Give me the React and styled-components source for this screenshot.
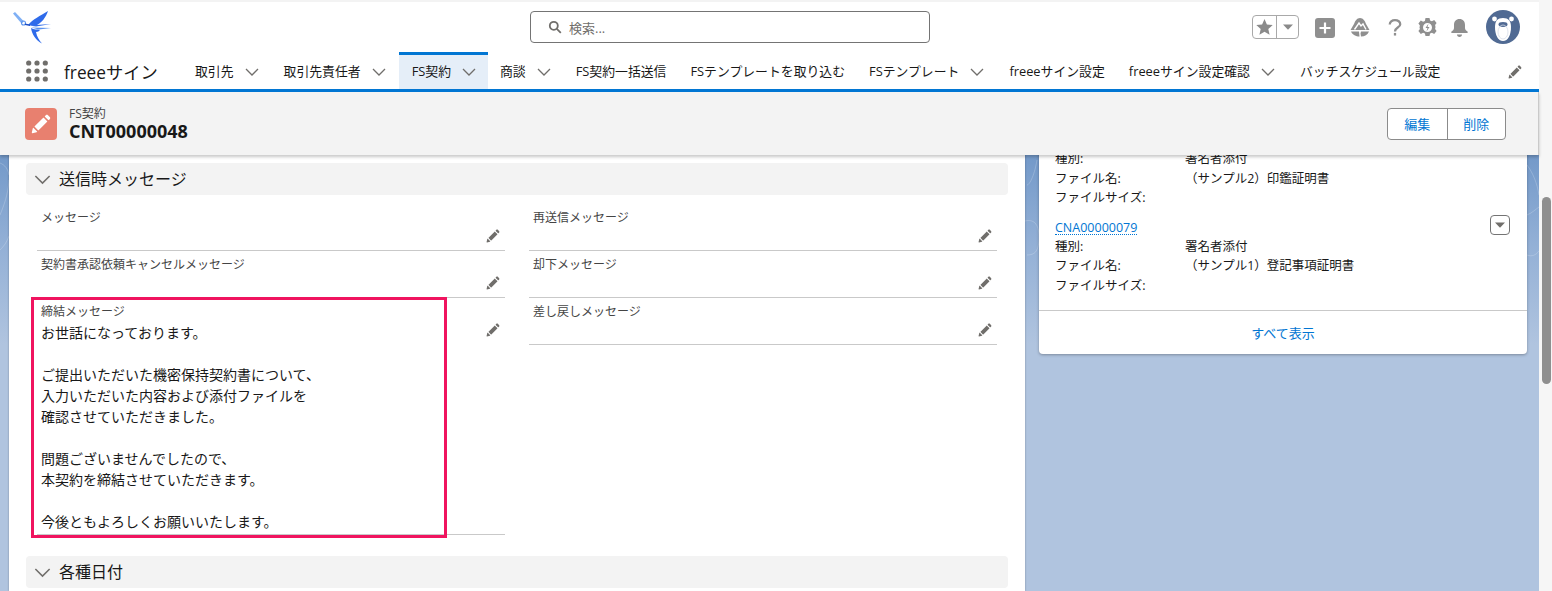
import React from "react";
import styled, { createGlobalStyle } from "styled-components";

const Global = createGlobalStyle`
  html, body { margin: 0; padding: 0; overflow: hidden; background: #f3f3f3; }
  * { box-sizing: border-box; }
  body { font-family: "Open Sans", "Noto Sans CJK JP", sans-serif; color: #181818; }
`;

const Shell = styled.div`
  width: 1552px; height: 591px; display: flex; overflow: hidden; background: #f3f3f3;
`;
const Viewport = styled.div`
  width: 1539px; height: 591px; display: flex; flex-direction: column; padding-top: 2px; position: relative;
`;
const ScrollTrack = styled.div`
  width: 13px; padding: 197px 1px 0 3px; background: #f6f6f6;
`;
const ScrollThumb = styled.div`
  height: 187px; background: #8f8f8f; border-radius: 5px;
`;
const TopBar = styled.header`
  height: 50px; background: #fff; display: grid; grid-template-columns: 530px 400px 1fr; align-items: center; flex: none; position: relative;
`;
const LogoBox = styled.div`
  padding: 2px 0 0 13px; display: flex;
`;
const Search = styled.div`
  height: 32px; border: 1px solid #747474; border-radius: 4px; display: flex; align-items: center; gap: 7px; padding-left: 17px;
  font-size: 13px; color: #706e6b; background: #fff;
`;
const Tools = styled.div`
  display: flex; align-items: center; justify-content: flex-end; padding-right: 19px;
`;
const FavGroup = styled.div`
  width: 47px; height: 24px; border: 1px solid #a9a9a9; border-radius: 4px; display: flex; align-items: center; margin-right: 16px;
`;
const FavCell = styled.div`
  flex: ${p => (p.$narrow ? "0 0 22px" : "1")}; height: 100%; display: flex; align-items: center; justify-content: center;
  & + & { border-left: 1px solid #a9a9a9; }
`;
const ToolIcon = styled.div`
  width: ${p => p.$w}px; margin-right: ${p => p.$mr}px; margin-top: 1px; display: flex; justify-content: center;
`;
const Nav = styled.nav`
  height: 40px; background: #fff; border-bottom: 3px solid #0176d3; display: flex; align-items: stretch; flex: none; padding-left: 26px; position: relative; z-index: 3;
`;
const AppName = styled.div`
  font-size: 17.3px; color: #181818; width: 119px; margin-left: 16px; display: flex; align-items: center; padding-top: 1px; white-space: nowrap;
`;
const Waffle = styled.div`
  display: flex; align-items: center;
`;
const NavItem = styled.div`
  display: flex; align-items: center; padding: ${p => (p.$active ? "0 11px 3px 13px" : "0 12px 3px")}; font-size: 12.85px; color: #181818; white-space: nowrap;
  background: ${p => (p.$active ? "#e5eef8" : "transparent")};
  border-top: 3px solid ${p => (p.$active ? "#0176d3" : "transparent")};
`;
const NavChevron = styled.span`
  display: flex; margin-left: 10px; padding-top: 3px;
`;
const NavEdit = styled.div`
  margin-left: auto; padding: 3px 17px 0 0; display: flex; align-items: center;
`;
const Highlights = styled.section`
  height: 63px; flex: none; background: #f3f3f3; display: flex; align-items: center; padding: 0 32px 0 25px; position: relative; z-index: 2;
  box-shadow: 0 2px 3px rgba(0,0,0,.22);
  border-right: 1px solid #c9c9c9;
`;
const ObjIcon = styled.div`
  width: 32px; height: 32px; border-radius: 4px; background: #e8806f; display: flex; align-items: center; justify-content: center; margin-right: 12px;
`;
const Heading = styled.div`
  flex: 1; display: flex; flex-direction: column;
`;
const ObjType = styled.div`
  font-size: 12px; line-height: 15px; color: #444;
`;
const RecName = styled.div`
  font-size: 18px; line-height: 20px; font-weight: 700; color: #181818;
`;
const BtnGroup = styled.div`
  display: flex; height: 32px; border: 1px solid #8b8b8b; border-radius: 4px; background: #fff;
`;
const Btn = styled.div`
  width: 58.5px; display: flex; align-items: center; justify-content: center; font-size: 13px; color: #0176d3;
  & + & { border-left: 1px solid #8b8b8b; }
`;
const Content = styled.main`
  flex: 1; min-height: 0; overflow: hidden; display: flex; position: relative; padding-left: 9px; gap: 14px;
  background: linear-gradient(180deg, #7399c9 0, #93b0d6 90px, #b0c4df 190px);
`;
const Swirl = styled.svg`
  position: absolute; left: 0; top: 0; width: 1539px; height: 200px; pointer-events: none;
`;
const MainCard = styled.div`
  width: 1016px; background: #fff; padding: 8px 17px; position: relative; flex: none; box-shadow: 0 0 2px rgba(0,0,0,.3);
`;
const SectionHead = styled.div`
  height: 32px; background: #f3f3f3; border-radius: 4px; display: flex; align-items: center; gap: 7px; padding-left: 7px; font-size: 16px; color: #181818;
  margin-top: ${p => p.$mt || 0}px;
  & > span { margin-top: -2px; }
`;
const FieldGrid = styled.div`
  display: grid; grid-template-columns: 468px 468px; column-gap: 24px; padding: 9px 11px 0; align-items: start;
`;
const Field = styled.div`
  position: relative; border-bottom: 1px solid #c9c9c9; min-height: 47px; padding: 5px 4px 0;
`;
const Label = styled.div`
  font-size: 12px; line-height: 17px; color: #444;
`;
const Value = styled.div`
  font-size: 14px; line-height: 21px; color: #181818; margin-top: 2px; white-space: pre-line; padding-bottom: 2px;
`;
const EditBtn = styled.span`
  position: absolute; right: 5px; top: 25px; display: flex;
`;
const Annotation = styled.div`
  position: absolute; left: -6px; top: -1px; width: 416px; height: 241px; border: 3px solid #f0145f; pointer-events: none;
`;
const SideCard = styled.aside`
  width: 488px; align-self: flex-start; flex: none; background: #fff; border-radius: 0 0 4px 4px; box-shadow: 0 1px 3px rgba(0,0,0,.3); margin-top: -27px; position: relative;
`;
const SideList = styled.div`
  padding: 21px 16px 15px;
`;
const SideItem = styled.div`
  position: relative;
  & + & { margin-top: 7px; }
`;
const SideLink = styled.a`
  font-size: 12.5px; line-height: 19px; color: #0176d3; border-bottom: 1px dotted #0176d3; display: inline-block; height: 17px; margin-top: 1px;
`;
const SideRow = styled.div`
  display: grid; grid-template-columns: 130px 1fr; font-size: 12.5px; line-height: 19.5px; color: #181818;
`;
const MenuBtn = styled.span`
  position: absolute; right: 1px; top: 0; width: 20px; height: 20px; border: 1px solid #747474; border-radius: 4px; display: flex; align-items: center; justify-content: center; background: #fff;
`;
const SideFoot = styled.div`
  border-top: 1px solid #c9c9c9; height: 44px; display: flex; align-items: center; justify-content: center; font-size: 13px; color: #0176d3;
`;

const Chevron = ({ size = 16, color = "#706e6b", sw = 1.3 }) => (
  <svg width={size} height={size} viewBox="0 0 16 16" fill="none" stroke={color} strokeWidth={sw}>
    <path d="M2 5l6 6 6-6" />
  </svg>
);
const Pencil = ({ size = 14, color = "#706e6b" }) => (
  <svg width={size} height={size} viewBox="0 0 52 52" fill={color}>
    <path d="M9.5 33.4l8.9 8.9c.4.4 1 .4 1.4 0L42 20c.4-.4.4-1 0-1.4l-8.8-8.8c-.4-.4-1-.4-1.4 0L9.5 32.1c-.4.4-.4 1 0 1.3zM36.1 5.7c-.4.4-.4 1 0 1.4l8.8 8.8c.4.4 1 .4 1.4 0l2.5-2.5c1.6-1.5 1.6-3.9 0-5.5l-4.7-4.7c-1.6-1.6-4.1-1.6-5.7 0l-2.3 2.5zM2.1 48.2c-.2 1 .7 1.9 1.7 1.7l10.9-2.6c.4-.1.7-.3.9-.5l.2-.2c.2-.2.3-.9-.1-1.3l-9-9c-.4-.4-1.1-.3-1.3-.1l-.2.2c-.3.3-.4.6-.5.9L2.1 48.2z" />
  </svg>
);
const Caret = ({ color = "#706e6b" }) => (
  <svg width="10" height="6" viewBox="0 0 10 6" fill={color}><path d="M0 .5h10L5 5.8z" /></svg>
);

const Logo = () => (
  <svg width="40" height="34" viewBox="0 0 40 34">
    <path d="M0 2.5 2 1l9 9.5-2.5 2z" fill="#7fb0f5" />
    <circle cx="10.5" cy="12" r="2" fill="none" stroke="#5b93ee" strokeWidth="1.1" />
    <path d="M15 14C20 8 27 5 35 0c-2 6-6 12-13 15z" fill="#2f6bea" />
    <path d="M16 14.5 38 13l-15 2.5z" fill="#2f6bea" />
    <path d="M18 16.5 38 17l-12 1.5z" fill="#5b93ee" />
    <path d="M18 17c3 2 6 1 9 2-1 1-2 2-4 2 1 5 3 8 6 11.5-6-3-10-9-11-15.5z" fill="#2f6bea" />
    <path d="M12 12.5l5 1V15l-5-1z" fill="#1f4fc4" />
  </svg>
);
const Trail = () => (
  <svg width="20" height="19" viewBox="0 0 20 19">
    <path fill="#8f8f8f" d="M10 0c3 0 5 3 6 6l3.500 6H.5L4 6c1-3 3-6 6-6z" />
    <path fill="none" stroke="#fff" strokeWidth="1.4" d="M4.500 11.500 9 5l2 3 2-2 3 5.500" />
    <path fill="#8f8f8f" d="M1 13.500h8l.5 5c-3.500 0-7-1.500-8.500-5zM11 13.500h8c-1.500 3.500-4 5-8 5l-.5-3z" />
  </svg>
);
const Gear = () => (
  <svg width="19" height="19" viewBox="0 0 19 19">
    <path fill="#8f8f8f" fillRule="evenodd" d="M7.500 0h4l.6 2.500 1.800.8 2.300-1.300 2.400 3-1.500 2 .4 2-.4 2 1.500 2-2.400 3-2.300-1.300-1.800.8-.6 2.500h-4l-.6-2.500-1.800-.8L2.800 16 .4 13l1.500-2-.4-1.500.4-2-1.500-2 2.400-3 2.300 1.300 1.800-.8zM9.500 5a4.500 4.500 0 1 0 0 9 4.500 4.500 0 0 0 0-9z" />
    <path fill="#8f8f8f" d="M10.500 5.500 7.500 10h2l-1 3.500 3-4.500h-2z" />
  </svg>
);
const Bell = () => (
  <svg width="19" height="20" viewBox="0 0 19 20" fill="#8f8f8f">
    <path d="M9.500 1c3.500 0 5.500 2.500 5.500 6v3c0 1.500 1 2.500 2.500 3.500.5.500.5 1.500-.5 1.500H2c-1 0-1-1-.5-1.500C3 12.500 4 11.500 4 10V7c0-3.500 2-6 5.500-6z" />
    <path d="M7 16.500h5c0 1.500-1 2.500-2.500 2.500S7 18 7 16.500z" />
  </svg>
);
const Avatar = () => (
  <svg width="34" height="34" viewBox="0 0 34 34">
    <circle cx="17" cy="17" r="17" fill="#506a93" />
    <circle cx="8.500" cy="9" r="2.400" fill="#fff" />
    <circle cx="25.500" cy="9" r="2.400" fill="#fff" />
    <path d="M17 8c5.500 0 8 3 8 9 0 8-3 14-8 14s-8-6-8-14c0-6 2.500-9 8-9z" fill="#fff" />
    <ellipse cx="17" cy="14.500" rx="4.500" ry="2.400" fill="#506a93" />
    <ellipse cx="17" cy="22" rx="5" ry="7" fill="none" stroke="#d5dce7" strokeWidth=".8" />
  </svg>
);

const navItems = [
  ["取引先", true], ["取引先責任者", true], ["FS契約", true, true], ["商談", true],
  ["FS契約一括送信"], ["FSテンプレートを取り込む"], ["FSテンプレート", true],
  ["freeeサイン設定"], ["freeeサイン設定確認", true], ["バッチスケジュール設定"],
];

const message = `お世話になっております。

ご提出いただいた機密保持契約書について、
入力いただいた内容および添付ファイルを
確認させていただきました。

問題ございませんでしたので、
本契約を締結させていただきます。

今後ともよろしくお願いいたします。`;

export default function App() {
  return (
    <Shell>
      <Global />
      <Viewport>
        <TopBar>
          <LogoBox><Logo /></LogoBox>
          <Search>
            <svg width="14" height="14" viewBox="0 0 14 14" fill="none" stroke="#706e6b" strokeWidth="1.800">
              <circle cx="5.800" cy="5.800" r="4" /><path d="m8.800 8.800 4 4" />
            </svg>
            検索...
          </Search>
          <Tools>
            <FavGroup>
              <FavCell>
                <svg width="17" height="16" viewBox="0 0 17 16" fill="#8a8a8a"><path d="m8.500 0 2.400 5.500 5.800.6-4.400 3.900 1.300 5.800-5.100-3-5.100 3L4.700 10 .3 6.100l5.800-.6z" /></svg>
              </FavCell>
              <FavCell $narrow><Caret color="#8a8a8a" /></FavCell>
            </FavGroup>
            <ToolIcon $w={20} $mr={15}>
              <svg width="20" height="20" viewBox="0 0 20 20"><rect width="20" height="20" rx="3" fill="#8f8f8f" /><path d="M10 4.500v11M4.500 10h11" stroke="#fff" strokeWidth="2.200" /></svg>
            </ToolIcon>
            <ToolIcon $w={20} $mr={15}><Trail /></ToolIcon>
            <ToolIcon $w={20} $mr={12}>
              <svg width="14" height="19" viewBox="0 0 16 20" fill="none" stroke="#8f8f8f" strokeWidth="2.600">
                <path d="M2 6.500C2 3.500 4.500 1.500 8 1.500s6 2 6 4.700c0 4-6 3.800-6 8.300" /><path d="M8 16.200v3" />
              </svg>
            </ToolIcon>
            <ToolIcon $w={20} $mr={12}><Gear /></ToolIcon>
            <ToolIcon $w={20} $mr={17}><Bell /></ToolIcon>
            <Avatar />
          </Tools>
        </TopBar>
        <Nav>
          <Waffle>
            <svg width="22" height="22" viewBox="0 0 22 22" fill="#706e6b">
              {[3, 11, 19].flatMap(y => [2.700, 11, 19.300].map(x => <circle key={`${x}-${y}`} cx={x} cy={y} r="2.600" />))}
            </svg>
          </Waffle>
          <AppName>freeeサイン</AppName>
          {navItems.map(([t, c, a]) => (
            <NavItem key={t} $active={a}>
              {t}
              {c && <NavChevron><Chevron /></NavChevron>}
            </NavItem>
          ))}
          <NavEdit><Pencil /></NavEdit>
        </Nav>
        <Highlights>
          <ObjIcon><Pencil size={20} color="#fff" /></ObjIcon>
          <Heading>
            <ObjType>FS契約</ObjType>
            <RecName>CNT00000048</RecName>
          </Heading>
          <BtnGroup><Btn>編集</Btn><Btn>削除</Btn></BtnGroup>
        </Highlights>
        <Content>
          <Swirl viewBox="0 0 1539 200" fill="none" stroke="rgba(255,255,255,.2)" strokeWidth="1">
            <path d="M0 60C4 50 8 40 9 25M0 95c4-4 7-8 9-14M0 8c5 2 8 6 9 12" />
            <path d="M1027 30c3 0 8-12 10-25M1027 100c8 0 12-4 12-18s-6-18-14-16M1527 10c6 8 10 18 12 30M1527 60c5-2 9-6 12-8M1527 100c5 2 9 0 12-4" />
          </Swirl>
          <MainCard>
            <SectionHead><Chevron size={19} sw={1.300} /><span>送信時メッセージ</span></SectionHead>
            <FieldGrid>
              <Field><Label>メッセージ</Label><EditBtn><Pencil /></EditBtn></Field>
              <Field><Label>再送信メッセージ</Label><EditBtn><Pencil /></EditBtn></Field>
              <Field><Label>契約書承認依頼キャンセルメッセージ</Label><EditBtn><Pencil /></EditBtn></Field>
              <Field><Label>却下メッセージ</Label><EditBtn><Pencil /></EditBtn></Field>
              <Field>
                <Label>締結メッセージ</Label>
                <Value>{message}</Value>
                <EditBtn><Pencil /></EditBtn>
                <Annotation />
              </Field>
              <Field><Label>差し戻しメッセージ</Label><EditBtn><Pencil /></EditBtn></Field>
            </FieldGrid>
            <SectionHead $mt={21}><Chevron size={19} sw={1.300} /><span>各種日付</span></SectionHead>
          </MainCard>
          <SideCard>
            <SideList>
              <SideItem>
                <SideRow><span>種別:</span><span>署名者添付</span></SideRow>
                <SideRow><span>ファイル名:</span><span>（サンプル2）印鑑証明書</span></SideRow>
                <SideRow><span>ファイルサイズ:</span><span /></SideRow>
              </SideItem>
              <SideItem>
                <SideLink>CNA00000079</SideLink>
                <MenuBtn><Caret /></MenuBtn>
                <SideRow><span>種別:</span><span>署名者添付</span></SideRow>
                <SideRow><span>ファイル名:</span><span>（サンプル1）登記事項証明書</span></SideRow>
                <SideRow><span>ファイルサイズ:</span><span /></SideRow>
              </SideItem>
            </SideList>
            <SideFoot>すべて表示</SideFoot>
          </SideCard>
        </Content>
      </Viewport>
      <ScrollTrack><ScrollThumb /></ScrollTrack>
    </Shell>
  );
}
